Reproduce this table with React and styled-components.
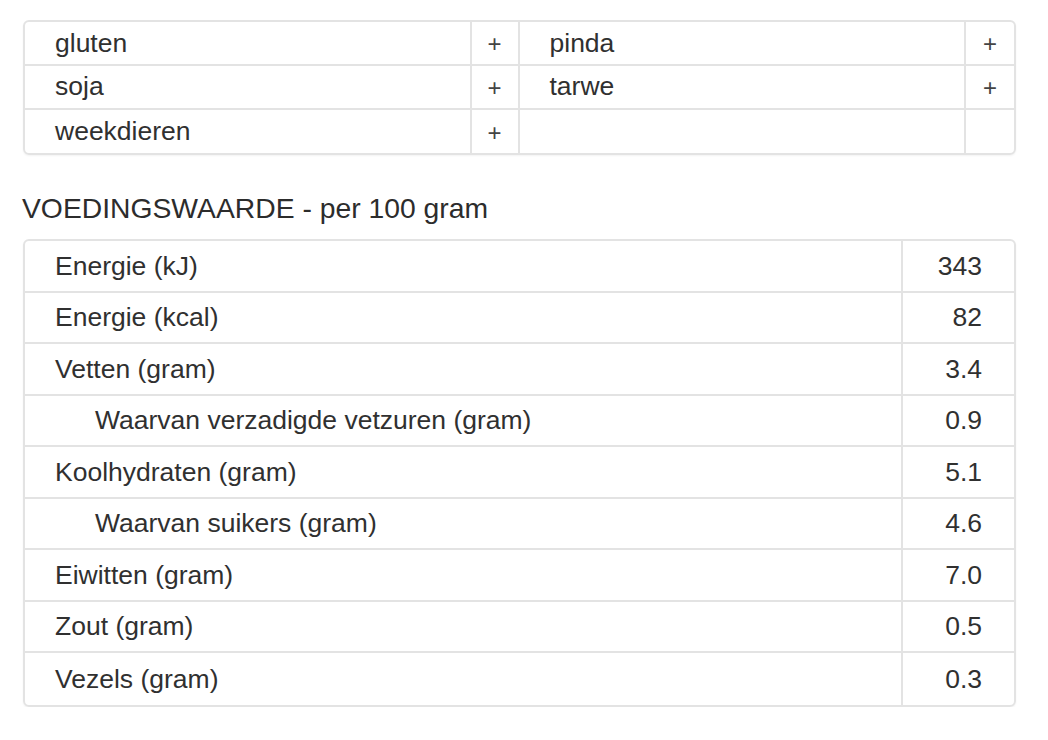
import React from "react";
import styled, { createGlobalStyle } from "styled-components";

const GlobalStyle = createGlobalStyle`
  body {
    margin: 0;
    background: #ffffff;
    font-family: "Liberation Sans", Arial, Helvetica, sans-serif;
    color: #303030;
  }
`;

const Page = styled.div`
  width: 993px;
  padding: 20px 0 0 23px;
`;

const Table = styled.div`
  display: grid;
  grid-template-columns: ${(p) => p.$columns};
  border: 2px solid #e3e3e3;
  border-radius: 6px;
  overflow: hidden;
  box-shadow: 0 1px 2px rgba(0, 0, 0, 0.05);
`;

const Cell = styled.div`
  display: flex;
  align-items: center;
  box-sizing: border-box;
  min-height: ${(p) => p.$height}px;
  border-bottom: ${(p) => (p.$lastRow ? "none" : "2px solid #e3e3e3")};
  border-right: ${(p) => (p.$lastCol ? "none" : "2px solid #e3e3e3")};
  font-size: 26.5px;
  line-height: 1;
  color: #303030;
`;

const AllergenName = styled(Cell)`
  padding-left: 30px;
`;

const AllergenMark = styled(Cell)`
  justify-content: center;
  font-size: 24px;
  color: #444;
  padding-top: 3px;
`;

const SectionTitle = styled.h2`
  margin: 37px 0 15px -1px;
  font-size: 28.3px;
  line-height: 32px;
  font-weight: normal;
  color: #2c2c2c;
`;

const NutrientLabel = styled(Cell)`
  padding-left: ${(p) => (p.$indent ? 70 : 30)}px;
`;

const NutrientValue = styled(Cell)`
  justify-content: flex-end;
  padding-right: 32px;
`;

const allergens = [
  ["gluten", true],
  ["pinda", true],
  ["soja", true],
  ["tarwe", true],
  ["weekdieren", true],
  ["", false],
];

const nutrients = [
  ["Energie (kJ)", "343", false],
  ["Energie (kcal)", "82", false],
  ["Vetten (gram)", "3.4", false],
  ["Waarvan verzadigde vetzuren (gram)", "0.9", true],
  ["Koolhydraten (gram)", "5.1", false],
  ["Waarvan suikers (gram)", "4.6", true],
  ["Eiwitten (gram)", "7.0", false],
  ["Zout (gram)", "0.5", false],
  ["Vezels (gram)", "0.3", false],
];

export default function App() {
  const allergenRows = Math.ceil(allergens.length / 2);
  return (
    <>
      <GlobalStyle />
      <Page>
        <Table $columns="1fr 48px 1fr 48px">
          {allergens.map(([name, present], i) => {
            const lastRow = Math.floor(i / 2) === allergenRows - 1;
            const rightSide = i % 2 === 1;
            return (
              <React.Fragment key={i}>
                <AllergenName $height={43.8} $lastRow={lastRow}>
                  {name}
                </AllergenName>
                <AllergenMark $height={43.8} $lastRow={lastRow} $lastCol={rightSide}>
                  {present ? "+" : ""}
                </AllergenMark>
              </React.Fragment>
            );
          })}
        </Table>

        <SectionTitle>VOEDINGSWAARDE - per 100 gram</SectionTitle>

        <Table $columns="1fr 111px">
          {nutrients.map(([label, value, indent], i) => {
            const lastRow = i === nutrients.length - 1;
            return (
              <React.Fragment key={label}>
                <NutrientLabel $height={51.5} $indent={indent} $lastRow={lastRow}>
                  {label}
                </NutrientLabel>
                <NutrientValue $height={51.5} $lastRow={lastRow} $lastCol>
                  {value}
                </NutrientValue>
              </React.Fragment>
            );
          })}
        </Table>
      </Page>
    </>
  );
}
